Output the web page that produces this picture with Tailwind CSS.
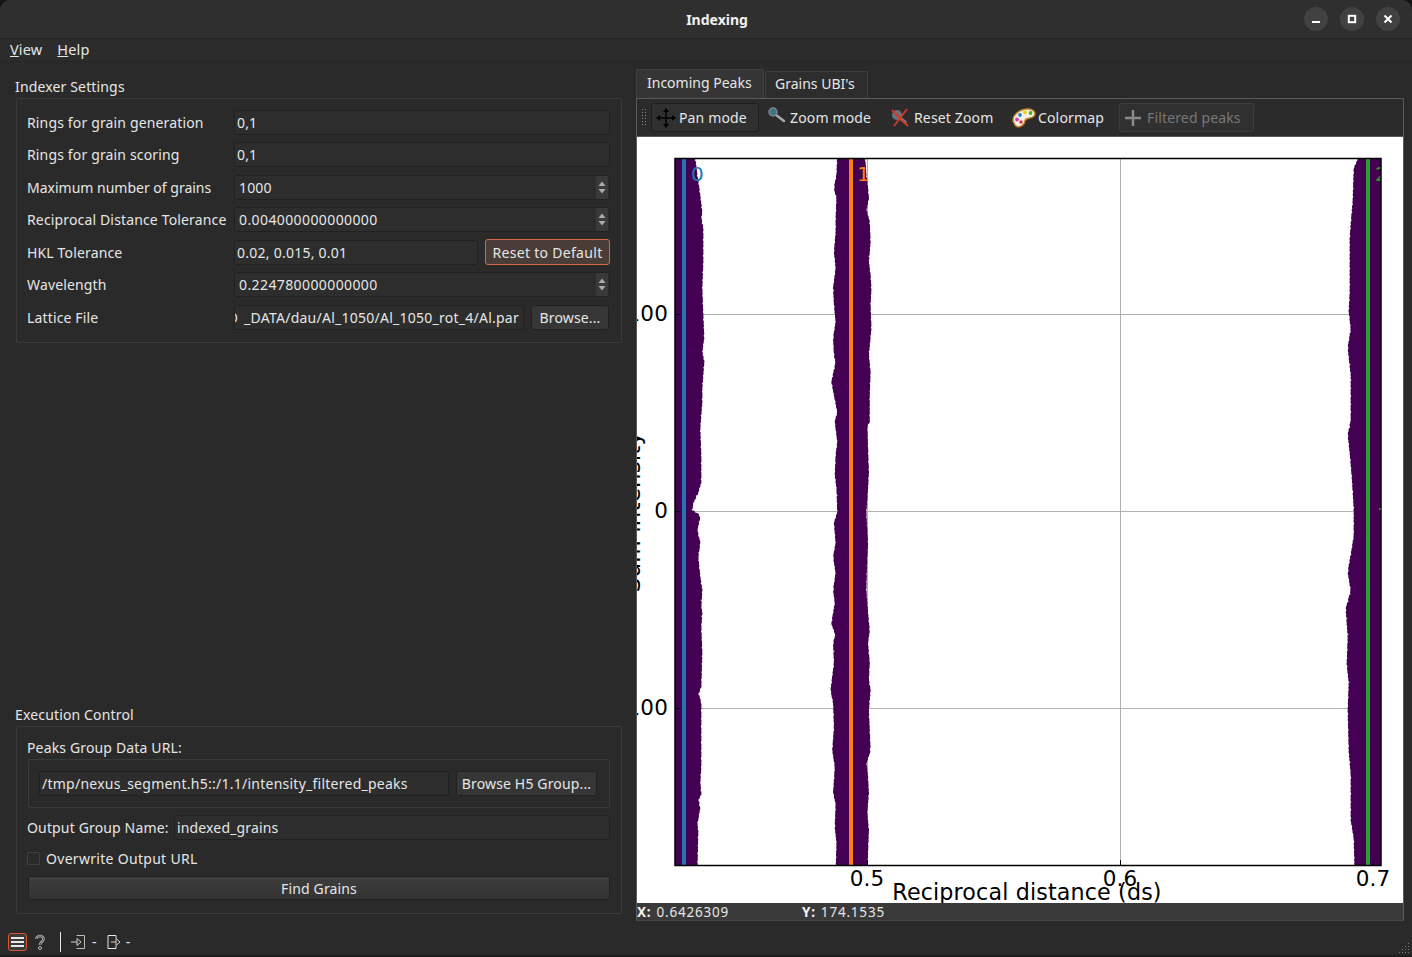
<!DOCTYPE html>
<html lang="en">
<head>
  <meta charset="UTF-8">
  <title>Indexing</title>
  <script src="https://cdn.jsdelivr.net/npm/@tailwindcss/browser@4"></script>
</head>
<body class="bg-[#141414] overflow-hidden">
<div class="w-[1412px] h-[957px] flex flex-col bg-[#2a2a2a] rounded-t-[10px] overflow-hidden text-[#e6e6e6] text-[14px] tracking-[0.15px] font-['Noto_Sans',sans-serif]">

  <!-- title bar -->
  <div class="h-[39px] shrink-0 flex items-center bg-[#2f2f2f] border-b border-[#262626]">
    <div class="flex-1"></div>
    <div class="font-bold text-[14px] tracking-normal text-[#f0f0f0] pl-[34px]">Indexing</div>
    <div class="flex-1 flex justify-end items-center gap-[12px] pr-[12px]">
      <div class="w-[24px] h-[24px] rounded-full bg-[#414141] flex items-center justify-center"><svg width="10" height="10"><rect x="1" y="7" width="8" height="2" fill="#fff"/></svg></div>
      <div class="w-[24px] h-[24px] rounded-full bg-[#414141] flex items-center justify-center"><svg width="10" height="10"><rect x="1.8" y="1.8" width="6.4" height="6.4" fill="none" stroke="#fff" stroke-width="2"/></svg></div>
      <div class="w-[24px] h-[24px] rounded-full bg-[#414141] flex items-center justify-center"><svg width="10" height="10"><path d="M1.5 1.5L8.5 8.500M8.500 1.500L1.500 8.500" stroke="#fff" stroke-width="2"/></svg></div>
    </div>
  </div>

  <!-- menu -->
  <div class="h-[23px] shrink-0 flex items-center gap-[15px] pl-[10px] text-[14.500px] bg-[#2c2c2c] border-b border-[#262626] pb-[1px]">
    <span><span class="underline">V</span>iew</span>
    <span><span class="underline">H</span>elp</span>
  </div>

  <div class="flex flex-1 min-h-0">
    <!-- left panel -->
    <div class="w-[636px] shrink-0 flex flex-col pl-[15px] pr-[14px] pb-[16px]">
      <div class="h-[36px] pt-[15px] leading-[20px]">Indexer Settings</div>
      <div class="ml-[1px] h-[245px] border border-[#3a3a3a] rounded-[2px] pl-[10px] pr-[11px] pt-[10.700px] flex flex-col gap-[7.500px]">
        <div class="flex items-center h-[25px]">
          <div class="w-[207px] shrink-0">Rings for grain generation</div>
          <div class="flex-1 h-[25px] flex items-center px-[2px] bg-[#2d2d2d] border border-[#212121] rounded-[2px]">0,1</div>
        </div>
        <div class="flex items-center h-[25px]">
          <div class="w-[207px] shrink-0">Rings for grain scoring</div>
          <div class="flex-1 h-[25px] flex items-center px-[2px] bg-[#2d2d2d] border border-[#212121] rounded-[2px]">0,1</div>
        </div>
        <div class="flex items-center h-[25px]">
          <div class="w-[207px] shrink-0 tracking-normal">Maximum number of grains</div>
          <div class="flex-1 h-[25px] flex items-center pl-[4px] bg-[#2d2d2d] border border-[#212121] rounded-[2px]">
            <span class="flex-1">1000</span>
            <div class="w-[12px] h-[23px] mr-[1px] flex flex-col items-center justify-center gap-[3px] bg-[#3a3a3a]">
              <svg width="8" height="5"><path d="M4 0.500L7.500 5H0.500Z" fill="#aaa"/></svg>
              <svg width="8" height="5"><path d="M4 4.500L7.500 0H0.500Z" fill="#aaa"/></svg>
            </div>
          </div>
        </div>
        <div class="flex items-center h-[25px]">
          <div class="w-[207px] shrink-0 whitespace-nowrap">Reciprocal Distance Tolerance</div>
          <div class="flex-1 h-[25px] flex items-center pl-[4px] bg-[#2d2d2d] border border-[#212121] rounded-[2px]">
            <span class="flex-1 tracking-[0.4px]">0.004000000000000</span>
            <div class="w-[12px] h-[23px] mr-[1px] flex flex-col items-center justify-center gap-[3px] bg-[#3a3a3a]">
              <svg width="8" height="5"><path d="M4 0.500L7.500 5H0.500Z" fill="#aaa"/></svg>
              <svg width="8" height="5"><path d="M4 4.500L7.500 0H0.500Z" fill="#aaa"/></svg>
            </div>
          </div>
        </div>
        <div class="flex items-center h-[25px]">
          <div class="w-[207px] shrink-0">HKL Tolerance</div>
          <div class="flex-1 h-[25px] flex items-center px-[2px] bg-[#2d2d2d] border border-[#212121] rounded-[2px] tracking-[0.25px]">0.02, 0.015, 0.01</div>
          <div class="ml-[7px] w-[125px] h-[26px] flex items-center justify-center bg-[#4a3d37] border border-[#d4694a] rounded-[3px] tracking-[0.3px]">Reset to Default</div>
        </div>
        <div class="flex items-center h-[25px]">
          <div class="w-[207px] shrink-0">Wavelength</div>
          <div class="flex-1 h-[25px] flex items-center pl-[4px] bg-[#2d2d2d] border border-[#212121] rounded-[2px]">
            <span class="flex-1 tracking-[0.4px]">0.224780000000000</span>
            <div class="w-[12px] h-[23px] mr-[1px] flex flex-col items-center justify-center gap-[3px] bg-[#3a3a3a]">
              <svg width="8" height="5"><path d="M4 0.500L7.500 5H0.500Z" fill="#aaa"/></svg>
              <svg width="8" height="5"><path d="M4 4.500L7.500 0H0.500Z" fill="#aaa"/></svg>
            </div>
          </div>
        </div>
        <div class="flex items-center h-[25px]">
          <div class="w-[207px] shrink-0">Lattice File</div>
          <div class="flex-1 min-w-0 h-[25px] flex items-center justify-end overflow-hidden whitespace-nowrap pr-[4px] bg-[#2d2d2d] border border-[#212121] rounded-[2px]"><span class="mr-[6px]">D</span><span class="tracking-[0.25px]">_DATA/dau/Al_1050/Al_1050_rot_4/Al.par</span></div>
          <div class="ml-[7px] mr-[1px] w-[78px] shrink-0 h-[25px] flex items-center justify-center bg-[#363636] border border-[#212121] rounded-[3px]">Browse...</div>
        </div>
      </div>

      <div class="flex-1"></div>

      <div class="h-[24px] pt-[3px] leading-[20px]">Execution Control</div>
      <div class="ml-[1px] h-[188px] border border-[#3a3a3a] rounded-[2px] px-[11px] pt-[11px] flex flex-col">
        <div class="h-[21px] leading-[20px] -ml-[1px]">Peaks Group Data URL:</div>
        <div class="h-[49px] border border-[#3a3a3a] rounded-[2px] pl-[10px] pr-[12px] flex items-center gap-[7px]">
          <div class="flex-1 h-[25px] flex items-center px-[2px] bg-[#2d2d2d] border border-[#212121] rounded-[2px] whitespace-nowrap tracking-[0.25px]">/tmp/nexus_segment.h5::/1.1/intensity_filtered_peaks</div>
          <div class="w-[141px] h-[25px] shrink-0 flex items-center justify-center bg-[#363636] border border-[#212121] rounded-[3px] whitespace-nowrap">Browse H5 Group...</div>
        </div>
        <div class="mt-[7px] h-[25px] flex items-center">
          <div class="w-[147px] shrink-0 whitespace-nowrap -ml-[1px]">Output Group Name:</div>
          <div class="flex-1 h-[25px] flex items-center px-[2px] bg-[#2d2d2d] border border-[#212121] rounded-[2px]">indexed_grains</div>
        </div>
        <div class="mt-[8px] h-[20px] flex items-center gap-[6px] -ml-[1px]">
          <div class="w-[13px] h-[13px] border border-[#404040] rounded-[1px]"></div>
          <div class="tracking-[0.3px]">Overwrite Output URL</div>
        </div>
        <div class="mt-[8px] h-[24px] flex items-center justify-center bg-gradient-to-b from-[#3d3d3d] to-[#333333] border border-[#212121] rounded-[2px]">Find Grains</div>
      </div>
    </div>

    <!-- right panel -->
    <div class="w-[768px] shrink-0 flex flex-col pt-[7px]">
      <div class="h-[29px] flex items-end shrink-0">
        <div class="w-[128px] h-[29px] pl-[10px] pb-[3px] flex items-center tracking-normal bg-[#353535] border border-[#3f3f3f] border-b-0 rounded-t-[2px]">Incoming Peaks</div>
        <div class="ml-[1px] w-[103px] h-[27px] pl-[9px] pb-[3px] flex items-center tracking-normal bg-[#2d2d2d] border border-[#3f3f3f] border-b-0 rounded-t-[2px]">Grains UBI's</div>
      </div>
      <div class="h-[823px] shrink-0 border border-[#5a5a5a] border-b-[#454545] flex flex-col">
        <!-- toolbar -->
        <div class="h-[38px] shrink-0 flex items-center bg-[#2b2b2b] border-b border-[#5a5a5a] pl-[4px]">
          <div class="w-[7px] h-[19px] mr-[3px] bg-[radial-gradient(#8a8a8a_1px,transparent_1px)] bg-[length:3px_3px]"></div>
          <div class="w-[108px] h-[29px] flex items-center bg-[#303030] border border-[#1f1f1f] rounded-[3px] pl-[4px]">
            <svg width="20" height="20" viewBox="0 0 20 20" class="mr-[3px]">
              <path d="M10 2V18M2 10H18" stroke="#000" stroke-width="1.500"/>
              <path d="M10 0L13 4H7ZM10 20L13 16H7ZM0 10L4 7V13ZM20 10L16 7V13Z" fill="#000"/>
            </svg>
            <span>Pan mode</span>
          </div>
          <div class="ml-[8px] w-[123px] flex items-center">
            <svg width="20" height="20" viewBox="0 0 20 20" class="mr-[3px] -mt-[3px]">
              <path d="M9 9L17 15" stroke="#a8a8a8" stroke-width="2.500" stroke-linecap="round"/>
              <circle cx="6" cy="6" r="4" fill="#3f7486" stroke="#7d878a" stroke-width="1.500"/>
            </svg>
            <span>Zoom mode</span>
          </div>
          <div class="w-[122px] flex items-center">
            <svg width="20" height="20" viewBox="0 0 20 20" class="mr-[4px]">
              <circle cx="7" cy="7" r="5" fill="#67737a"/>
              <path d="M10 10L16 15" stroke="#888" stroke-width="3"/>
              <path d="M2 2L18 18M17 1L4 18" stroke="#d9372c" stroke-width="1.800"/>
            </svg>
            <span>Reset Zoom</span>
          </div>
          <div class="w-[107px] flex items-center">
            <svg width="24" height="20" viewBox="0 0 24 20" class="mr-[2px]">
              <path d="M1.500 14C-1 8 7 1.500 15 1C21 0.500 24.500 4.500 22 8C19 11.500 14 9 13 12.500C12.500 17 8 19.500 5 18.500C3.500 18 2.500 16.500 1.500 14Z" fill="#f6f3ea" stroke="#c9852a" stroke-width="1.500"/>
              <circle cx="8" cy="7" r="1.900" fill="#2f7fd1"/>
              <circle cx="13" cy="4.500" r="1.900" fill="#e8d21e"/>
              <circle cx="18.500" cy="5" r="1.900" fill="#3fae3a"/>
              <circle cx="5" cy="11.500" r="1.900" fill="#d63aa5"/>
              <circle cx="9" cy="14" r="1.700" fill="#d92f2f"/>
            </svg>
            <span>Colormap</span>
          </div>
          <div class="w-[135px] h-[29px] flex items-center bg-[#303030] border border-[#3d3d3d] rounded-[3px] pl-[4px] text-[#777777]">
            <svg width="18" height="18" viewBox="0 0 18 18" class="mr-[5px]"><path d="M9 1V17M1 9H17" stroke="#8a8a8a" stroke-width="2.500"/></svg>
            <span>Filtered peaks</span>
          </div>
        </div>

        <!-- plot -->
        <svg class="block shrink-0 bg-white" width="766" height="766" viewBox="637 137 766 766">
          <defs>
            <clipPath id="axes"><rect x="675" y="158" width="706" height="707"/></clipPath>
          </defs>
          <g stroke="#b0b0b0" stroke-width="1">
            <path d="M675 314.500H1381M675 511.500H1381M675 708.500H1381M1120.500 158V865M867.500 158V865M1373.500 158V865"/>
          </g>
          <g clip-path="url(#axes)">
            <g fill="#440154" stroke="#440154" stroke-width="7" stroke-linecap="round" stroke-dasharray="0 3.500 0 4.500 0 3 0 5">
              <polygon transform="translate(-3 0)" points="675,150 694,150 697,175 699,188 702,212 701,218 703,228 703,262 702,288 703,315 704,337 702,352 704,362 702,388 702,402 700,428 701,455 701,482 698,492 693,502 692,512 700,517 697,530 700,543 698,557 700,577 702,590 701,607 702,613 701,627 702,653 701,687 698,693 701,703 701,727 701,767 700,783 701,793 698,800 700,807 697,825 698,830 697,875 675,875"/>
              <polygon transform="translate(851 0) scale(0.84 1) translate(-851 0)" points="838,150 837,175 834,188 837,198 836,218 836,232 834,252 836,268 833,288 834,305 836,322 833,338 834,355 836,362 831,382 834,395 838,412 835,422 838,442 836,455 835,475 837,488 838,513 834,523 836,543 833,557 836,573 833,590 835,603 831,623 836,635 833,643 834,663 830,690 833,703 834,727 832,750 835,767 833,793 836,803 835,827 837,843 836,875 867,875 869,830 867,813 869,793 868,777 866,763 871,750 869,710 871,690 869,680 870,663 868,643 870,630 868,613 866,590 867,560 868,543 866,513 868,488 869,472 868,448 867,425 870,422 870,395 871,372 869,355 872,328 871,305 872,288 871,275 869,262 871,242 870,222 866,210 869,198 868,188 866,175 864,150"/>
              <polygon transform="translate(3 0)" points="1358,160 1354,169 1353,201 1351,224 1350,238 1350,293 1349,311 1351,329 1348,348 1351,375 1351,421 1348,435 1350,453 1352,476 1354,508 1354,536 1352,549 1348,572 1351,591 1346,609 1348,637 1347,664 1349,683 1348,710 1349,751 1351,774 1351,820 1354,838 1355,875 1390,875 1390,150 1366,150"/>
            </g>
            <rect x="682" y="158" width="4" height="707" fill="#1f77b4"/>
            <rect x="849" y="158" width="4" height="707" fill="#ff7f0e"/>
            <rect x="1366" y="158" width="4" height="707" fill="#2ca02c"/>
            <g font-family="DejaVu Sans" font-size="20">
              <text x="691" y="181" fill="#1f77b4">0</text>
              <text x="857" y="181" fill="#ff7f0e">1</text>
              <text x="1375" y="181" fill="#2ca02c">2</text>
            </g>
          </g>
          <circle cx="1381" cy="509" r="1.500" fill="#fff"/>
          <rect x="675" y="158.500" width="706" height="707" fill="none" stroke="#000" stroke-width="1.500"/>
          <path d="M675 314.500H680M675 511.500H680M675 708.500H680M867.500 865V860M1120.500 865V860M1373.500 865V860" stroke="#000" stroke-width="1"/>
          <g font-family="DejaVu Sans" font-size="21.500" fill="#000">
            <text x="668" y="321" text-anchor="end">100</text>
            <text x="668" y="518" text-anchor="end">0</text>
            <text x="668" y="715" text-anchor="end">100</text>
            <text x="867" y="886" text-anchor="middle">0.5</text>
            <text x="1120" y="886" text-anchor="middle">0.6</text>
            <text x="1373" y="886" text-anchor="middle">0.7</text>
            <text x="1027" y="900" text-anchor="middle" font-size="22.200">Reciprocal distance (ds)</text>
            <text transform="translate(640 512) rotate(-90)" text-anchor="middle" font-size="23">Sum intensity</text>
          </g>
        </svg>

        <!-- coordinates -->
        <div class="flex-1 flex items-center bg-[#3a3a3a] text-[13.500px] tracking-[0.8px] leading-none pt-[2px]">
          <div class="w-[165px] whitespace-nowrap"><b class="mr-[5px] text-[#f2f2f2]">X:</b>0.6426309</div>
          <div class="whitespace-nowrap"><b class="mr-[5px] text-[#f2f2f2]">Y:</b>174.1535</div>
        </div>
      </div>
    </div>
    <div class="flex-1"></div>
  </div>

  <!-- bottom status -->
  <div class="relative h-[27px] shrink-0 flex items-center pl-[8px] pb-[2px] border-b-[2px] border-[#1d1d1d]">
    <div class="w-[19px] h-[18px] border border-[#d8562e] rounded-[3px] bg-[#3a3a3a] flex items-center justify-center">
      <svg width="13" height="12"><path d="M0 2H13M0 6H13M0 10H13" stroke="#e8e8e8" stroke-width="2"/></svg>
    </div>
    <svg class="ml-[7px]" width="12" height="16" viewBox="0 0 12 16">
      <path d="M2.500 5C2.500 1 9.500 1 9.500 5C9.500 8 6 7.500 6 11" fill="none" stroke="#b8b8b8" stroke-width="2.600"/>
      <path d="M2.500 5C2.500 1 9.500 1 9.500 5C9.500 8 6 7.500 6 11" fill="none" stroke="#2a2a2a" stroke-width="0.800"/>
      <circle cx="6" cy="14" r="1.500" fill="none" stroke="#b8b8b8"/>
    </svg>
    <div class="ml-[14px] w-[1px] h-[20px] bg-[#e6e6e6]"></div>
    <svg class="ml-[10px]" width="15" height="14" viewBox="0 0 15 14"><path d="M5.500 0.500H13.500V13.500H5.500" fill="none" stroke="#bdbdbd"/><path d="M0 7H6M6 3.500L10 7L6 10.500Z" fill="none" stroke="#d0d0d0"/></svg>
    <span class="ml-[6px] text-[14px]">-</span>
    <svg class="ml-[10px]" width="15" height="14" viewBox="0 0 15 14"><path d="M9 0.500H1V13.500H9M9 0.500V3M9 11V13.500" fill="none" stroke="#e6e6e6"/><path d="M4 7H9M9 3.500L13 7L9 10.500Z" fill="none" stroke="#d0d0d0"/></svg>
    <span class="ml-[4px] text-[14px]">-</span>
    <svg class="absolute right-[2px] bottom-[2px]" width="11" height="11" viewBox="0 0 11 11"><path d="M9 1h1v1H9zM6 4h1v1H6zM9 4h1v1H9zM3 7h1v1H3zM6 7h1v1H6zM9 7h1v1H9zM0 10h1v1H0zM3 10h1v1H3zM6 10h1v1H6zM9 10h1v1H9z" fill="#7a7a7a"/></svg>
  </div>
</div>
</body>
</html>
